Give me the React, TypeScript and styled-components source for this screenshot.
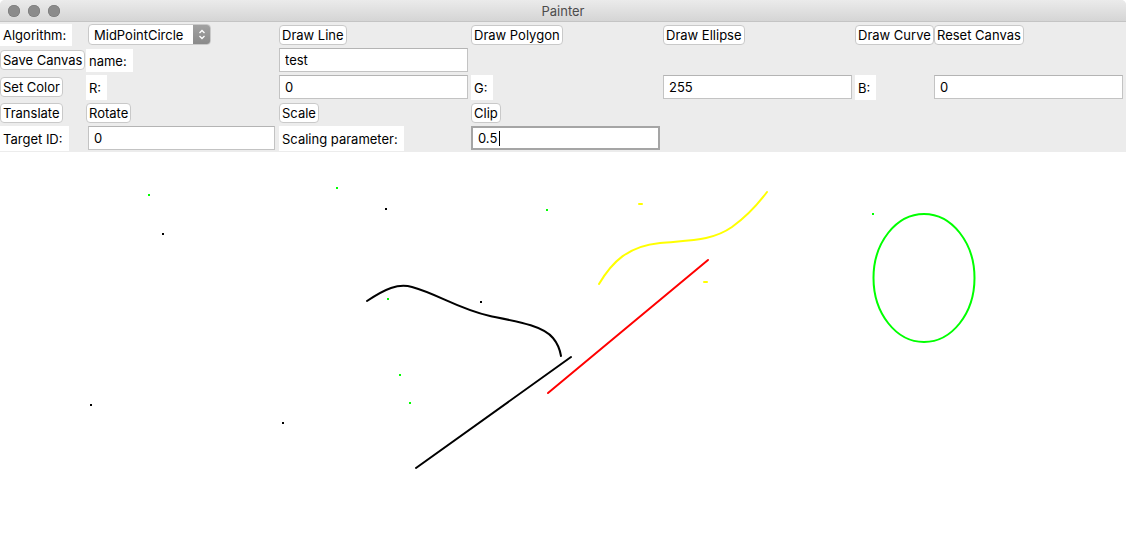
import React from 'react';
import styled, { createGlobalStyle } from 'styled-components';

const GlobalStyle = createGlobalStyle`
	html, body {
		margin: 0;
		padding: 0;
		background: #ffffff;
	}
	body {
		font-family: Inter, 'Noto Sans', 'Liberation Sans', sans-serif;
		font-size: 13px;
		color: #000;
	}
`;

const Window = styled.div`
	width: 1126px;
	height: 100vh;
	display: flex;
	flex-direction: column;
	overflow: hidden;
	border-radius: 5px 5px 0 0;
	background: #ececec;
`;

const TitleBar = styled.div`
	height: 22px;
	flex: none;
	display: flex;
	align-items: center;
	position: relative;
	padding-left: 8px;
	gap: 8px;
	background: linear-gradient(#ebebeb, #d5d5d5);
	border-bottom: 1px solid #c4c4c4;
	box-sizing: border-box;
`;

const Light = styled.span`
	width: 12px;
	height: 12px;
	border-radius: 50%;
	background: #8b8b8b;
	box-shadow: inset 0 0 0 0.5px #737373;
`;

const Title = styled.div`
	position: absolute;
	left: 0;
	right: 0;
	top: 0;
	bottom: 0;
	display: flex;
	align-items: center;
	justify-content: center;
	color: #4c4c4c;
	font-size: 13px;
	pointer-events: none;
`;

const Controls = styled.div`
	flex: none;
	display: grid;
	grid-template-columns: 86px 192px 192px 192px 192px 80px 192px;
	grid-template-rows: 25px 26px 28px 23px 28px;
	background: #ececec;
`;

const Cell = styled.div<{ $col: number; $row: number; $shift?: number }>`
	grid-column: ${(p) => p.$col};
	grid-row: ${(p) => p.$row};
	display: flex;
	align-items: center;
	padding-left: ${(p) => p.$shift ?? 0}px;
	min-width: 0;
`;

const Button = styled.button`
	font: inherit;
	font-size: 13px;
	color: #000;
	height: 20px;
	padding: 0 2px;
	background: #ffffff;
	border: 1px solid #c9c9c9;
	border-radius: 4px;
	white-space: nowrap;
	line-height: 18px;
	cursor: pointer;
`;

const Label = styled.div`
	align-self: stretch;
	margin: 2px 0 1px;
	display: flex;
	align-items: center;
	padding: 0 6px 0 3px;
	background: #ffffff;
	white-space: nowrap;
`;

const FieldBox = styled.div`
	position: relative;
	display: flex;
`;

const Field = styled.input<{ $focused?: boolean; $width?: number }>`
	font: inherit;
	font-size: 13px;
	width: ${(p) => p.$width ?? 189}px;
	height: 24px;
	box-sizing: border-box;
	padding: 0 6px 0 5px;
	background: #fff;
	color: #000;
	border: ${(p) => (p.$focused ? '2px solid #a5a5a5' : '1px solid #c3c3c3')};
	border-top-color: ${(p) => (p.$focused ? '#a5a5a5' : '#b4b4b4')};
	outline: none;
	caret-color: transparent;
`;

const Caret = styled.span<{ $left: number }>`
	position: absolute;
	left: ${(p) => p.$left}px;
	top: 5px;
	width: 1px;
	height: 15px;
	background: #000;
`;

const Combo = styled.div`
	width: 123px;
	height: 21px;
	box-sizing: border-box;
	display: flex;
	align-items: stretch;
	border: 1px solid #c9c9c9;
	border-radius: 4px;
	background: #fff;
	overflow: hidden;
`;

const ComboText = styled.span`
	flex: 1;
	display: flex;
	align-items: center;
	padding-left: 5px;
	white-space: nowrap;
`;

const Stepper = styled.span`
	width: 17px;
	display: flex;
	align-items: center;
	justify-content: center;
	background: linear-gradient(#a2a2a2, #8a8a8a);
`;

const Canvas = styled.div`
	flex: 1;
	background: #ffffff;
	min-height: 0;
`;

const Drawing = styled.svg`
	display: block;
	width: 100%;
	height: 100%;
`;

const greenDots = [
	[148, 194],
	[336, 187],
	[546, 209],
	[872, 213],
	[387, 298],
	[399, 374],
	[409, 402],
];

const blackDots = [
	[385, 208],
	[162, 233],
	[480, 301],
	[90, 404],
	[282, 422],
];

const App = () => {
	return (
		<>
			<GlobalStyle />
			<Window>
				<TitleBar>
					<Light />
					<Light />
					<Light />
					<Title>Painter</Title>
				</TitleBar>

				<Controls>
					{/* row 1 */}
					<Cell $col={1} $row={1}>
						<Label>Algorithm:</Label>
					</Cell>
					<Cell $col={2} $row={1} $shift={2}>
						<Combo>
							<ComboText>MidPointCircle</ComboText>
							<Stepper>
								<svg width="8" height="13" viewBox="0 0 8 13" fill="none" stroke="#fff" strokeWidth="1.3">
									<polyline points="1.5,5 4,2.5 6.5,5" />
									<polyline points="1.5,8 4,10.5 6.5,8" />
								</svg>
							</Stepper>
						</Combo>
					</Cell>
					<Cell $col={3} $row={1} $shift={1}>
						<Button>Draw Line</Button>
					</Cell>
					<Cell $col={4} $row={1} $shift={1}>
						<Button>Draw Polygon</Button>
					</Cell>
					<Cell $col={5} $row={1} $shift={1}>
						<Button>Draw Ellipse</Button>
					</Cell>
					<Cell $col={6} $row={1} $shift={1}>
						<Button>Draw Curve</Button>
					</Cell>
					<Cell $col={7} $row={1}>
						<Button>Reset Canvas</Button>
					</Cell>

					{/* row 2 */}
					<Cell $col={1} $row={2}>
						<Button>Save Canvas</Button>
					</Cell>
					<Cell $col={2} $row={2}>
						<Label>name:</Label>
					</Cell>
					<Cell $col={3} $row={2} $shift={1}>
						<Field defaultValue="test" />
					</Cell>

					{/* row 3 */}
					<Cell $col={1} $row={3}>
						<Button>Set Color</Button>
					</Cell>
					<Cell $col={2} $row={3}>
						<Label>R:</Label>
					</Cell>
					<Cell $col={3} $row={3} $shift={1}>
						<Field defaultValue="0" />
					</Cell>
					<Cell $col={4} $row={3} $shift={1}>
						<Label>G:</Label>
					</Cell>
					<Cell $col={5} $row={3} $shift={1}>
						<Field defaultValue="255" />
					</Cell>
					<Cell $col={6} $row={3} $shift={1}>
						<Label>B:</Label>
					</Cell>
					<Cell $col={7} $row={3}>
						<Field defaultValue="0" />
					</Cell>

					{/* row 4 */}
					<Cell $col={1} $row={4}>
						<Button>Translate</Button>
					</Cell>
					<Cell $col={2} $row={4}>
						<Button>Rotate</Button>
					</Cell>
					<Cell $col={3} $row={4} $shift={1}>
						<Button>Scale</Button>
					</Cell>
					<Cell $col={4} $row={4} $shift={1}>
						<Button>Clip</Button>
					</Cell>

					{/* row 5 */}
					<Cell $col={1} $row={5}>
						<Label>Target ID:</Label>
					</Cell>
					<Cell $col={2} $row={5} $shift={2}>
						<Field defaultValue="0" $width={187} />
					</Cell>
					<Cell $col={3} $row={5} $shift={1}>
						<Label>Scaling parameter:</Label>
					</Cell>
					<Cell $col={4} $row={5} $shift={1}>
						<FieldBox>
							<Field $focused defaultValue="0.5" />
							<Caret $left={28} />
						</FieldBox>
					</Cell>
				</Controls>

				<Canvas>
					<Drawing viewBox="0 152 1126 406" preserveAspectRatio="none">
						<g fill="none" strokeWidth="2" strokeLinecap="round">
							<line x1="416" y1="468" x2="571" y2="357" stroke="#000" />
							<line x1="548" y1="393" x2="708" y2="260" stroke="#ff0000" />
							<path
								d="M367,301 C385,289 398,283 412,287 C438,294 458,309 490,316 C520,322 543,326 553,338 C558,344 560,350 561,356"
								stroke="#000"
							/>
							<path
								d="M599,284 C612,262 628,246 660,243 C690,240 712,241 732,227 C746,217 758,204 767,192"
								stroke="#ffff00"
							/>
							<line x1="639" y1="204" x2="642" y2="204" stroke="#ffff00" />
							<line x1="704" y1="282" x2="707" y2="282" stroke="#ffff00" />
							<ellipse cx="924" cy="278" rx="50.5" ry="64" stroke="#00ff00" />
						</g>
						{greenDots.map(([x, y], i) => (
							<rect key={'g' + i} x={x} y={y} width="2" height="2" fill="#00ff00" />
						))}
						{blackDots.map(([x, y], i) => (
							<rect key={'b' + i} x={x} y={y} width="2" height="2" fill="#000" />
						))}
					</Drawing>
				</Canvas>
			</Window>
		</>
	);
};

export default App;
